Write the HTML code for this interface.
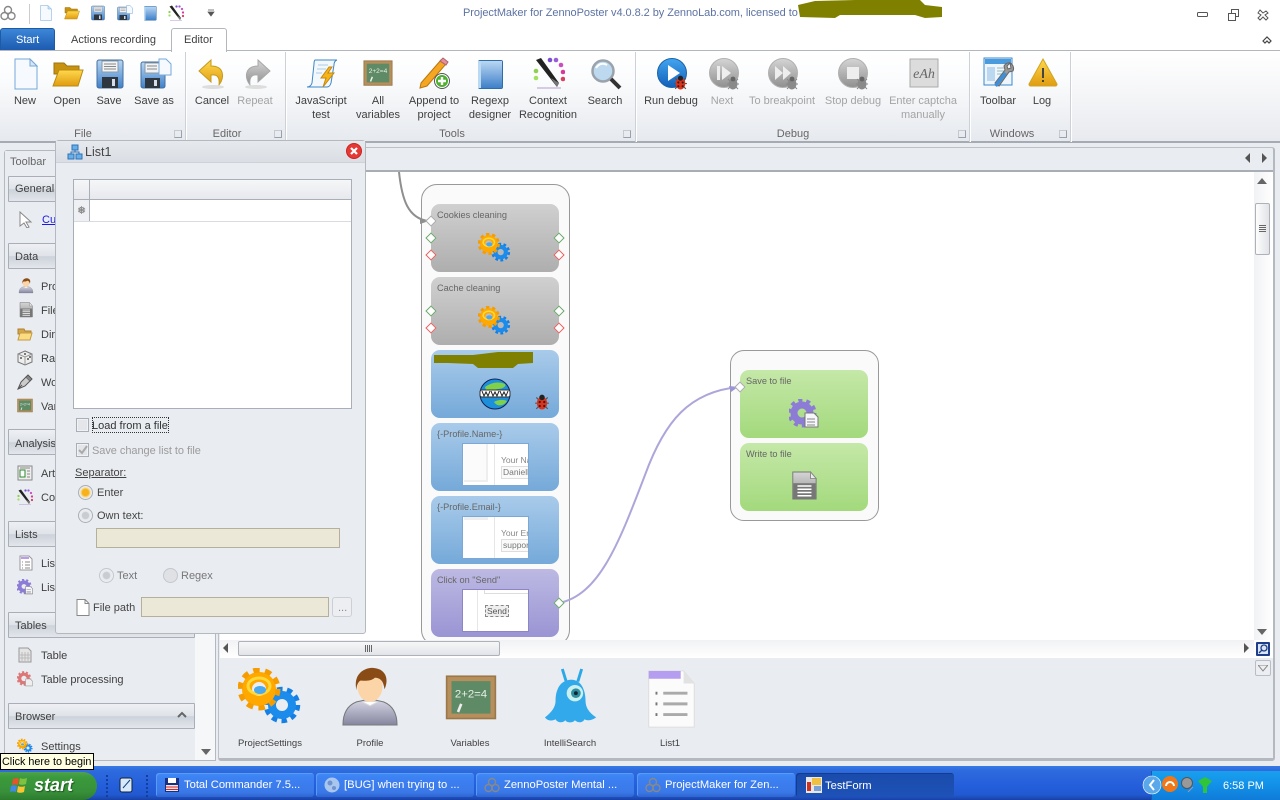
<!DOCTYPE html>
<html><head><meta charset="utf-8"><title>ProjectMaker for ZennoPoster</title>
<style>
html,body{margin:0;padding:0}
body{width:1280px;height:800px;position:relative;overflow:hidden;background:#e9ecf1;font-family:"Liberation Sans",sans-serif;font-size:11px;color:#333}
div,svg,span.a{position:absolute;box-sizing:border-box}
.t{position:absolute;white-space:nowrap;line-height:14px;font-size:11px;color:#3f3f3f}
.c{text-align:center;transform:translateX(-50%)}
.g{color:#a4a4a4}
.gl{color:#666}
.sep{width:1px;top:52px;height:90px;background:#ccd0d7;box-shadow:1px 0 0 #fff}
.lau{width:8px;height:8px;top:130px;border:1px solid #9aa0aa;border-top-color:#c5c9d0;border-left-color:#c5c9d0}
.hd{left:8px;width:187px;height:26px;border:1px solid #a9aeb8;background:linear-gradient(#eef0f4,#dfe3e9 50%,#ccd2da 52%,#e3e6eb);border-radius:1px}
.node{left:431px;width:128px;height:68px;border-radius:9px}
.gr{background:linear-gradient(#d0d0d0,#aeaeae)}
.bl{background:linear-gradient(#a9cbea,#75a9d9)}
.pu{background:linear-gradient(#bdb9e3,#9a95d3)}
.gn{background:linear-gradient(#c5e8a8,#a3d97c);left:740px}
.nt{position:absolute;left:6px;top:4px;font-size:9.2px;color:#666;white-space:nowrap;line-height:13px}
.th{background:#fff;border:1px solid #7ca8d8;left:31px;top:20px;width:67px;height:43px;overflow:hidden}
.th .t{font-size:8.5px}
.d{width:8px;height:8px;transform:rotate(45deg);background:#fff;border:1px solid #6aa86a}
.r{border-color:#e86060}
.w{border-color:#aaa}
.tb{top:773px;height:24px;width:158px;border-radius:3px;background:linear-gradient(#3f8cf3,#3c81f3 20%,#3a78e8 80%,#2f65d0);box-shadow:inset 1px 1px 0 #5a9bf7;color:#fff}
.tb .t{color:#fff;font-size:11.2px;left:28px;top:5px}
.chk{width:13px;height:14px;border:1px solid #a9aeb8;background:#e4e6ea;box-shadow:inset 0 0 0 1px #f1f2f4}
.rad{width:15px;height:15px;border-radius:50%;border:1px solid #a9aeb8;background:radial-gradient(#c8ccd3 35%,#e7e9ed 45%,#f5f6f8)}
.inp{background:#ebe8d8;border:1px solid #b5b09c}
.b{font-size:9.5px}
</style></head><body>

<svg width="0" height="0" style="left:0;top:0"><defs>
<linearGradient id="gy" x1="0" y1="0" x2="0" y2="1"><stop offset="0" stop-color="#ffd84d"/><stop offset="1" stop-color="#e09b10"/></linearGradient>
<linearGradient id="gb" x1="0" y1="0" x2="0" y2="1"><stop offset="0" stop-color="#b9d7f3"/><stop offset="1" stop-color="#3f80c9"/></linearGradient>
<linearGradient id="gs" x1="0" y1="0" x2="0" y2="1"><stop offset="0" stop-color="#d5d5d5"/><stop offset="1" stop-color="#8f8f8f"/></linearGradient>
<linearGradient id="gf" x1="0" y1="0" x2="0" y2="1"><stop offset="0" stop-color="#42a5f0"/><stop offset="1" stop-color="#1260b8"/></linearGradient>
<linearGradient id="gp" x1="0" y1="0" x2="0" y2="1"><stop offset="0" stop-color="#d8d8e6"/><stop offset="1" stop-color="#85859f"/></linearGradient>

<symbol id="new" viewBox="0 0 32 32"><path d="M5 1h15l7 7v23H5z" fill="#f6faff" stroke="#74a8da"/><path d="M20 1v7h7z" fill="#d8e7f7" stroke="#74a8da"/></symbol>
<symbol id="open" viewBox="0 0 32 32"><path d="M2 5h10l3 3h12v8H2z" fill="#c8920f" stroke="#9c7410"/><path d="M7 12h24l-5 16H1z" fill="url(#gy)" stroke="#b98a10"/></symbol>
<symbol id="save" viewBox="0 0 32 32"><rect x="3" y="2" width="26" height="28" rx="2" fill="url(#gb)" stroke="#44709f"/><rect x="8" y="3" width="16" height="11" fill="#f1f3f5" stroke="#8a98a8"/><path d="M10 6h12M10 8.5h12M10 11h12" stroke="#888"/><rect x="8" y="19" width="16" height="11" fill="#2e3740"/><rect x="18" y="21" width="3" height="7" fill="#d5dee8"/></symbol>
<symbol id="saveas" viewBox="0 0 32 32"><rect x="1" y="4" width="24" height="26" rx="2" fill="url(#gb)" stroke="#44709f"/><rect x="5" y="5" width="14" height="10" fill="#f1f3f5" stroke="#8a98a8"/><path d="M7 8h10M7 11h10" stroke="#888"/><rect x="5" y="20" width="15" height="10" fill="#2e3740"/><rect x="14" y="22" width="3" height="6" fill="#d5dee8"/><path d="M19 1h7l5 5v11H19z" fill="#f6faff" stroke="#74a8da"/></symbol>
<symbol id="undo" viewBox="0 0 32 32"><path d="M14 2 2 13l12 11v-7c6-1 9 2 8 10 6-8 5-19-8-19z" fill="url(#gy)" stroke="#c59b1e"/><ellipse cx="16" cy="29" rx="11" ry="2" fill="#ddd"/></symbol>
<symbol id="redo" viewBox="0 0 32 32"><path d="M18 2l12 11-12 11v-7c-6-1-9 2-8 10-6-8-5-19 8-19z" fill="url(#gs)" stroke="#a8a8a8"/><ellipse cx="16" cy="29" rx="11" ry="2" fill="#ddd"/></symbol>
<symbol id="js" viewBox="0 0 32 32"><path d="M9 2h22c-3 1-3 4-3 5l-3 18c-1 3-2 4-4 4H1c2 0 4-1 5-4L8 6c0-2 0-3 1-4z" fill="#f3f8fd" stroke="#3f87c7"/><path d="M12 7h10M11 11h9M10 15h6" stroke="#a9cbe8"/><path d="M23 9l-8 11h5l-3 9 11-14h-6l4-6z" fill="#f6b417" stroke="#c5870f"/></symbol>
<symbol id="vars" viewBox="0 0 32 32"><rect x="1" y="2" width="30" height="26" fill="#b78f5c" stroke="#9a7848"/><rect x="4" y="5" width="24" height="20" fill="#5f8a66"/><text x="16" y="15" text-anchor="middle" font-size="7" font-family="Liberation Sans" fill="#e6f0e6">2+2=4</text><path d="M8 24l2-5" stroke="#eee" stroke-width="1.6"/></symbol>
<symbol id="append" viewBox="0 0 32 32"><path d="M2 26 22 3l5 4L8 29l-7 2z" fill="#f5a623" stroke="#b9770f"/><path d="M21 4l3-3 5 4-2 3z" fill="#e88ca0" stroke="#a66"/><circle cx="23" cy="24" r="7.5" fill="#fff" stroke="#555"/><circle cx="23" cy="24" r="6" fill="#4db02f"/><path d="M19 24h8M23 20v8" stroke="#fff" stroke-width="2.4"/></symbol>
<symbol id="regexp" viewBox="0 0 32 32"><rect x="4" y="2" width="25" height="29" rx="2" fill="#2f6da8"/><rect x="6" y="3" width="22" height="27" fill="url(#gb)"/><rect x="4" y="3" width="3" height="27" fill="#bcd9f2"/></symbol>
<symbol id="ctx" viewBox="0 0 32 32"><path d="M3 3l5-2 18 25-2 4z" fill="#222"/><path d="M18 21l6 9 2-4z" fill="#777"/><g><circle cx="17" cy="3" r="2.300" fill="#7a4fd0"/><circle cx="23" cy="3" r="2.300" fill="#9a5cd6"/><circle cx="28" cy="8" r="2.300" fill="#c94fc0"/><circle cx="30" cy="15" r="2.300" fill="#d8389a"/><circle cx="30" cy="22" r="2.300" fill="#d84060"/><circle cx="3" cy="14" r="2.300" fill="#8fd04f"/><circle cx="3" cy="21" r="2.300" fill="#a4e060"/></g><path d="M4 31h24" stroke="#b49ad0"/></symbol>
<symbol id="search" viewBox="0 0 32 32"><circle cx="13" cy="13" r="10.5" fill="#bcd9f0" stroke="#9aa2ac" stroke-width="2.5"/><path d="M6 10c3-5 8-5 11-3" stroke="#fff" stroke-width="2" fill="none"/><path d="M21 21l9 9" stroke="#333" stroke-width="4"/></symbol>
<symbol id="bug" viewBox="0 0 12 14"><path d="M1 3l2 2M11 3L9 5M0 8h2M12 8h-2M1 13l2-2M11 13l-2-2" stroke="#555"/><ellipse cx="6" cy="8" rx="4.5" ry="5.5" fill="#e0321a"/><circle cx="6" cy="3" r="2.4" fill="#222"/><circle cx="4" cy="7" r="1" fill="#222"/><circle cx="8" cy="7" r="1" fill="#222"/><circle cx="4" cy="10.500" r="1" fill="#222"/><circle cx="8" cy="10.500" r="1" fill="#222"/></symbol>
<symbol id="gbug" viewBox="0 0 12 14"><path d="M1 3l2 2M11 3L9 5M0 8h2M12 8h-2M1 13l2-2M11 13l-2-2" stroke="#888"/><ellipse cx="6" cy="8" rx="4.500" ry="5.500" fill="#8a8a8a"/><circle cx="6" cy="3" r="2.400" fill="#666"/></symbol>
<symbol id="run" viewBox="0 0 32 32"><circle cx="15" cy="15" r="14.500" fill="url(#gf)" stroke="#1b62a8"/><path d="M11 7l12 8-12 8z" fill="#fff"/><use href="#bug" x="17" y="17" width="13" height="15"/></symbol>
<symbol id="next" viewBox="0 0 32 32"><circle cx="15" cy="15" r="14.500" fill="url(#gs)" stroke="#b0b0b0"/><rect x="8" y="8" width="3" height="14" fill="#eee"/><path d="M13 8l9 7-9 7z" fill="#eee"/><use href="#gbug" x="18" y="18" width="12" height="14"/></symbol>
<symbol id="brk" viewBox="0 0 32 32"><circle cx="15" cy="15" r="14.500" fill="url(#gs)" stroke="#b0b0b0"/><path d="M7 8l8 7-8 7zM15 8l8 7-8 7z" fill="#eee"/><use href="#gbug" x="18" y="18" width="12" height="14"/></symbol>
<symbol id="stop" viewBox="0 0 32 32"><circle cx="15" cy="15" r="14.500" fill="url(#gs)" stroke="#b0b0b0"/><rect x="9" y="9" width="12" height="12" fill="#eee"/><use href="#gbug" x="18" y="18" width="12" height="14"/></symbol>
<symbol id="cap" viewBox="0 0 32 32"><rect x="2" y="2" width="28" height="28" fill="#dcdcdc" stroke="#aaa"/><text x="16" y="21" text-anchor="middle" font-size="14" font-style="italic" font-family="Liberation Serif" fill="#666">eAh</text></symbol>
<symbol id="tbar" viewBox="0 0 32 32"><rect x="1" y="1" width="28" height="27" fill="#eef5fc" stroke="#3c88cc"/><rect x="2" y="2" width="26" height="5" fill="#4a9ade"/><path d="M4 10h8v14H4z" fill="#bcd7f0"/><path d="M14 11h9M14 14h9M14 17h7" stroke="#9bb"/><path d="M27 6a6 6 0 0 1 3 8l-4 1-10 14-4-3 10-13-1-4a6 6 0 0 1 6-3l-3 3 1 3 3-1z" fill="#9a9a9a" stroke="#666"/><path d="M11 28l10-13 3 2-10 13z" fill="#3f8fd8"/></symbol>
<symbol id="log" viewBox="0 0 32 32"><path d="M16 2 30 27a2 2 0 0 1-1 2H3a2 2 0 0 1-1-2z" fill="url(#gy)" stroke="#d0a520"/><path d="M15 11h2v10h-2zM15 23h2v2h-2z" fill="#444"/></symbol>
<symbol id="gear" viewBox="0 0 64 58"><g fill="none"><circle cx="44" cy="37" r="10" stroke="#1b8cec" stroke-width="8"/><circle cx="44" cy="37" r="16" stroke="#1480e6" stroke-width="4.500" stroke-dasharray="5.500 4.550"/><circle cx="21" cy="21" r="12" stroke="#ffa800" stroke-width="10"/><circle cx="21" cy="21" r="19" stroke="#f59c00" stroke-width="5" stroke-dasharray="6.500 5.440"/><ellipse cx="21" cy="18" rx="11" ry="8" stroke="#ffd93a" stroke-width="3"/></g><ellipse cx="22" cy="22" rx="6" ry="4" fill="#4aa8ee"/></symbol>
<symbol id="pgear" viewBox="0 0 30 30"><circle cx="13" cy="14" r="8" fill="none" stroke="#8d7cd6" stroke-width="7"/><circle cx="13" cy="14" r="12.500" fill="none" stroke="#8d7cd6" stroke-width="4" stroke-dasharray="4 3.850"/><path d="M16 14h9l4 4v10H16z" fill="#f6f6fb" stroke="#777"/><path d="M18 20h8M18 23h8M18 26h8" stroke="#888"/></symbol>
<symbol id="doc" viewBox="0 0 30 32"><path d="M3 1h19l6 7v22H3z" fill="url(#gs)" stroke="#777"/><path d="M22 1v7h6z" fill="#eee" stroke="#888"/><rect x="3.500" y="13" width="24" height="17" fill="#777"/><path d="M8 16h15M8 19.500h15M8 23h15M8 26.500h15" stroke="#fff" stroke-width="1.600"/></symbol>
<symbol id="user" viewBox="0 0 60 64"><path d="M2 60c0-12 4-20 14-24l14-3 14 3c10 4 14 12 14 24z" fill="url(#gp)" stroke="#777"/><ellipse cx="30" cy="20" rx="13" ry="16" fill="#fbd5a8"/><path d="M16 24C12 6 26 0 34 1c12 1 16 11 11 22-1-8-4-12-10-12-4 4-12 3-15 3-3 2-4 6-4 10z" fill="#8a4c16"/><path d="M22 36l8 4 8-4" fill="#fff" stroke="#ddd"/></symbol>
<symbol id="folder" viewBox="0 0 16 16"><path d="M1 3h6l1 2h6v3H1z" fill="#d5a54a" stroke="#b08030"/><path d="M3 7h12l-2 7H1z" fill="#fbdc82" stroke="#c49a40"/></symbol>
<symbol id="dice" viewBox="0 0 16 16"><path d="M8 1l7 3v8l-7 3-7-3V4z" fill="#eee" stroke="#777"/><path d="M1 4l7 3 7-3M8 7v8" stroke="#999" fill="none"/><circle cx="4" cy="8" r="1" fill="#555"/><circle cx="11" cy="9" r="1" fill="#555"/><circle cx="13" cy="7" r="1" fill="#555"/><circle cx="8" cy="4" r="1" fill="#555"/></symbol>
<symbol id="pen" viewBox="0 0 16 16"><path d="M1 15l3-7 5-5 4 4-5 5z" fill="#ccc" stroke="#555"/><path d="M9 3l2-2 4 4-2 2" fill="#888" stroke="#555"/><path d="M1 15l4-4" stroke="#555"/></symbol>
<symbol id="art" viewBox="0 0 16 16"><rect x="1" y="1" width="14" height="14" fill="#eee" stroke="#888"/><rect x="3" y="5" width="5" height="7" fill="#fff" stroke="#2a8a2a"/><path d="M3 3h10M10 6h3M10 9h3M10 12h3" stroke="#888"/></symbol>
<symbol id="list" viewBox="0 0 16 16"><path d="M2 1h9l3 3v11H2z" fill="#fff" stroke="#999"/><rect x="3" y="2" width="8" height="2" fill="#b79cf0"/><path d="M4 7h1M7 7h5M4 10h1M7 10h5M4 13h1M7 13h5" stroke="#888"/></symbol>
<symbol id="tbl" viewBox="0 0 16 16"><path d="M2 1h9l3 3v11H2z" fill="#e4e4e4" stroke="#999"/><path d="M5 5v9M8 5v9M11 5v9M3 8h10M3 11h10" stroke="#bbb"/></symbol>
<symbol id="rgear" viewBox="0 0 30 30"><circle cx="13" cy="14" r="8" fill="none" stroke="#d77" stroke-width="6"/><circle cx="13" cy="14" r="12" fill="none" stroke="#d77" stroke-width="3.500" stroke-dasharray="4 3.500"/><path d="M16 15h9l4 4v9H16z" fill="#eee" stroke="#999"/></symbol>
<symbol id="alien" viewBox="0 0 60 62"><path d="M24 14L20 1M36 14l4-13" stroke="#2aa8e8" stroke-width="3"/><path d="M30 12C18 12 13 22 13 34c0 6-4 12-11 17 3 4 8 4 11 2 2 4 8 4 10 1 2 3 8 3 10 0 3 3 8 3 10-1 3 2 8 1 12-2-8-5-11-11-11-17 0-12-5-22-15-22z" fill="#31a9ea"/><circle cx="33" cy="26" r="8.500" fill="#c9f0ee"/><circle cx="34" cy="26" r="5" fill="#2e8ea0"/><circle cx="34" cy="26" r="2" fill="#123"/></symbol>
<symbol id="bigl" viewBox="0 0 52 64"><path d="M3 2h36l11 13v45H3z" fill="#fbfbfb" stroke="#ddd"/><path d="M3 2h33v8H3z" fill="#b59ef0"/><path d="M39 2v13h11z" fill="#e2e2e2"/><path d="M10 25h2M10 36h2M10 47h2" stroke="#777" stroke-width="3"/><path d="M18 25h25M18 36h25M18 47h25" stroke="#aaa" stroke-width="3"/></symbol>
<symbol id="globe" viewBox="0 0 32 32"><circle cx="16" cy="16" r="15" fill="#1d8fdb" stroke="#125"/><path d="M6 9c6-4 12-6 20-3 2 3-4 5-7 5-3 0-5 3-8 3-3 1-4-2-5-5zM15 24c3-2 9-3 13-1-2 4-9 7-13 1z" fill="#7fd04a"/><rect x="1" y="12" width="30" height="7" rx="2" fill="#fff" stroke="#333"/><path d="M3 13l2 5 2-4 2 4 2-5M12 13l2 5 2-4 2 4 2-5M21 13l2 5 2-4 2 4 2-5" stroke="#222" fill="none"/></symbol>
<symbol id="tree" viewBox="0 0 16 16"><rect x="5" y="1" width="6" height="5" fill="#6aaee8" stroke="#2c72b8"/><rect x="1" y="10" width="6" height="5" fill="#6aaee8" stroke="#2c72b8"/><rect x="9" y="10" width="6" height="5" fill="#6aaee8" stroke="#2c72b8"/><path d="M8 6v2M4 10V8h8v2" stroke="#2c72b8" fill="none"/></symbol>
<symbol id="zp" viewBox="0 0 16 16"><g fill="none" stroke="#888" stroke-width="1.400"><circle cx="8" cy="5" r="3.500"/><circle cx="4.500" cy="11" r="3.500"/><circle cx="11.500" cy="11" r="3.500"/></g></symbol>
</defs></svg>

<!-- title + tabs -->
<div style="left:0;top:0;width:1280px;height:51px;background:#fff"></div>
<svg style="left:0;top:5px" width="16" height="16"><use href="#zp"/></svg>
<div style="left:29px;top:4px;width:1px;height:20px;background:#ccc"></div>
<svg style="left:38px;top:5px" width="16" height="16"><use href="#new"/></svg>
<svg style="left:64px;top:5px" width="16" height="16"><use href="#open"/></svg>
<svg style="left:90px;top:5px" width="16" height="16"><use href="#save"/></svg>
<svg style="left:117px;top:5px" width="16" height="16"><use href="#saveas"/></svg>
<svg style="left:142px;top:5px" width="16" height="16"><use href="#regexp"/></svg>
<svg style="left:168px;top:5px" width="16" height="16"><use href="#ctx"/></svg>
<svg style="left:207px;top:9px" width="8" height="8"><path d="M1 1h6M1 3h6l-3 4z" fill="#555" stroke="#555" stroke-width=".7"/></svg>
<span class="t" style="left:463px;top:6px;color:#5d73a3;font-size:11px;letter-spacing:-.06px">ProjectMaker for ZennoPoster v4.0.8.2 by ZennoLab.com, licensed to</span>
<svg style="left:795px;top:0" width="150" height="20"><path d="M3 5L20 1 60 0H125l5 5 17 2V17l-17 1-10-3H45l-5 3-35-1z" fill="#808000"/></svg>
<svg style="left:1195px;top:8px" width="80" height="14" fill="none" stroke="#555"><rect x="2.500" y="4.500" width="10" height="4" rx="1"/><rect x="36.500" y="1.500" width="7" height="7" fill="#fff"/><rect x="33.500" y="5.500" width="7" height="7" fill="#fff"/><path d="M65 2l3 3 3-2 2 2-3 2 3 3-2 2-3-3-3 3-2-2 3-3-3-2z"/></svg>
<svg style="left:1262px;top:36px" width="10" height="9" fill="none" stroke="#444" stroke-width="1.200"><path d="M1 5l4-4 4 4-2 2-2-2-2 2z"/></svg>
<div style="left:0;top:28px;width:55px;height:22px;background:linear-gradient(#3c86d8,#1d5bb0);border-radius:3px 3px 0 0;border:1px solid #1f5aa5;border-bottom:0"></div>
<span class="t" style="left:16px;top:33px;color:#fff">Start</span>
<span class="t" style="left:71px;top:33px">Actions recording</span>
<div style="left:171px;top:28px;width:56px;height:24px;background:#fff;border:1px solid #b3b6bd;border-bottom:0;border-radius:3px 3px 0 0;z-index:2"></div>
<span class="t" style="left:184px;top:33px;z-index:3">Editor</span>

<!-- ribbon -->
<div style="left:0;top:50px;width:1280px;height:93px;background:linear-gradient(#fff 0,#fbfcfd 30%,#e6e9ee 100%);border-top:1px solid #b3b6bd;border-bottom:2px solid #a6aab2"></div>
<div style="left:1071px;top:51px;width:209px;height:90px;background:linear-gradient(#fff,#f4f5f7 50%,#e8eaef)"></div>
<div class="sep" style="left:185px"></div><div class="sep" style="left:285px"></div><div class="sep" style="left:635px"></div><div class="sep" style="left:969px"></div><div class="sep" style="left:1070px"></div>
<div class="lau" style="left:174px"></div><div class="lau" style="left:274px"></div><div class="lau" style="left:623px"></div><div class="lau" style="left:958px"></div><div class="lau" style="left:1059px"></div>

<svg style="left:10px;top:58px" width="32" height="32"><use href="#new"/></svg>
<svg style="left:52px;top:58px" width="32" height="32"><use href="#open"/></svg>
<svg style="left:94px;top:58px" width="32" height="32"><use href="#save"/></svg>
<svg style="left:140px;top:58px" width="32" height="32"><use href="#saveas"/></svg>
<svg style="left:197px;top:58px" width="32" height="32"><use href="#undo"/></svg>
<svg style="left:240px;top:58px" width="32" height="32"><use href="#redo"/></svg>
<svg style="left:306px;top:58px" width="32" height="32"><use href="#js"/></svg>
<svg style="left:362px;top:59px" width="32" height="30"><use href="#vars"/></svg>
<svg style="left:419px;top:57px" width="32" height="32"><use href="#append"/></svg>
<svg style="left:474px;top:58px" width="32" height="32"><use href="#regexp"/></svg>
<svg style="left:533px;top:57px" width="32" height="32"><use href="#ctx"/></svg>
<svg style="left:590px;top:58px" width="32" height="32"><use href="#search"/></svg>
<svg style="left:657px;top:58px" width="32" height="32"><use href="#run"/></svg>
<svg style="left:709px;top:58px" width="32" height="32"><use href="#next"/></svg>
<svg style="left:768px;top:58px" width="32" height="32"><use href="#brk"/></svg>
<svg style="left:838px;top:58px" width="32" height="32"><use href="#stop"/></svg>
<svg style="left:908px;top:57px" width="32" height="32"><use href="#cap"/></svg>
<svg style="left:983px;top:57px" width="32" height="32"><use href="#tbar"/></svg>
<svg style="left:1027px;top:57px" width="32" height="32"><use href="#log"/></svg>

<span class="t c" style="left:25px;top:94px">New</span>
<span class="t c" style="left:67px;top:94px">Open</span>
<span class="t c" style="left:109px;top:94px">Save</span>
<span class="t c" style="left:154px;top:94px">Save as</span>
<span class="t c" style="left:212px;top:94px">Cancel</span>
<span class="t c g" style="left:255px;top:94px">Repeat</span>
<span class="t c" style="left:321px;top:94px">JavaScript</span><span class="t c" style="left:321px;top:108px">test</span>
<span class="t c" style="left:378px;top:94px">All</span><span class="t c" style="left:378px;top:108px">variables</span>
<span class="t c" style="left:434px;top:94px">Append to</span><span class="t c" style="left:434px;top:108px">project</span>
<span class="t c" style="left:490px;top:94px">Regexp</span><span class="t c" style="left:490px;top:108px">designer</span>
<span class="t c" style="left:548px;top:94px">Context</span><span class="t c" style="left:548px;top:108px">Recognition</span>
<span class="t c" style="left:605px;top:94px">Search</span>
<span class="t c" style="left:671px;top:94px">Run debug</span>
<span class="t c g" style="left:722px;top:94px">Next</span>
<span class="t c g" style="left:782px;top:94px">To breakpoint</span>
<span class="t c g" style="left:853px;top:94px">Stop debug</span>
<span class="t c g" style="left:923px;top:94px">Enter captcha</span><span class="t c g" style="left:923px;top:108px">manually</span>
<span class="t c" style="left:998px;top:94px">Toolbar</span>
<span class="t c" style="left:1042px;top:94px">Log</span>
<span class="t c gl" style="left:83px;top:127px">File</span>
<span class="t c gl" style="left:227px;top:127px">Editor</span>
<span class="t c gl" style="left:452px;top:127px">Tools</span>
<span class="t c gl" style="left:793px;top:127px">Debug</span>
<span class="t c gl" style="left:1012px;top:127px">Windows</span>

<!-- workspace -->
<div style="left:0;top:143px;width:1280px;height:622px;background:#e9ecf1"></div>
<div style="left:218px;top:147px;width:1057px;height:614px;border:1px solid #bcc0c7;border-right:2px solid #b4b8bf;border-bottom:3px solid #b4b8bf;border-radius:3px"></div>
<svg style="left:1243px;top:152px" width="30" height="13" fill="#555"><path d="M7 1v10L2 6zM19 1v10l5-5z"/></svg>

<!-- canvas -->
<div style="left:220px;top:170px;width:1053px;height:488px;background:#fff;border-top:2px solid #a9adb5"></div>
<div style="left:1254px;top:172px;width:19px;height:468px;background:linear-gradient(90deg,#f1f2f4,#fff)"></div>
<svg style="left:1257px;top:177px" width="11" height="8"><path d="M0 7h10L5 1z" fill="#666"/></svg>
<div style="left:1255px;top:203px;width:15px;height:52px;background:linear-gradient(90deg,#fdfdfd,#e1e3e7);border:1px solid #adb1b8;border-radius:2px"></div>
<svg style="left:1258px;top:224px" width="9" height="9" stroke="#666"><path d="M1 1.500h7M1 3.500h7M1 5.500h7M1 7.500h7"/></svg>
<svg style="left:1257px;top:629px" width="11" height="7"><path d="M0 0h10L5 6z" fill="#666"/></svg>
<div style="left:1256px;top:642px;width:14px;height:14px;background:#dbe6f4;border:2px solid #1f3f8a;border-radius:1px"></div>
<svg style="left:1258px;top:644px" width="10" height="10" fill="none" stroke="#1f3f8a" stroke-width="1.300"><circle cx="6" cy="4" r="3"/><path d="M4 6L1 9"/></svg>
<div style="left:1255px;top:660px;width:16px;height:16px;background:#eceef1;border:1px solid #b9bdc4;border-radius:2px"></div>
<svg style="left:1258px;top:665px" width="10" height="7"><path d="M0 0h10L5 6z" fill="none" stroke="#888"/></svg>

<!-- group 1 -->
<div style="left:421px;top:184px;width:149px;height:462px;background:#fafafa;border:1px solid #999;border-radius:16px"></div>
<div class="node gr" style="top:204px"><span class="nt" style="top:5px">Cookies cleaning</span><svg style="left:47px;top:29px" width="33" height="30"><use href="#gear"/></svg></div>
<div class="node gr" style="top:277px"><span class="nt" style="top:5px">Cache cleaning</span><svg style="left:47px;top:29px" width="33" height="30"><use href="#gear"/></svg></div>
<div class="node bl" style="top:350px"><svg style="left:48px;top:28px" width="32" height="32"><use href="#globe"/></svg><svg style="left:104px;top:44px" width="14" height="16"><use href="#bug"/></svg></div>
<svg style="left:433px;top:352px" width="102" height="18"><path d="M1 3H40L65 0H100V11L85 12 80 16H45L40 12 15 11H1z" fill="#808000"/></svg>
<div class="node bl" style="top:423px"><span class="nt" style="top:5px">{-Profile.Name-}</span><div class="th"><div style="left:1px;top:0;width:24px;height:38px;background:#fbfbfb;border-right:2px solid #eee;border-bottom:2px solid #eee"></div><div style="left:31px;top:0;width:1px;height:42px;background:#e6e6e6"></div><span class="t" style="left:38px;top:9px;color:#888">Your Na</span><div style="left:38px;top:22px;width:30px;height:13px;background:#fafafa;border:1px solid #ddd"></div><span class="t" style="left:40px;top:21px;color:#777">Daniell</span></div></div>
<div class="node bl" style="top:496px"><span class="nt" style="top:5px">{-Profile.Email-}</span><div class="th"><div style="left:1px;top:0;width:24px;height:3px;background:#eee"></div><div style="left:31px;top:0;width:1px;height:42px;background:#e6e6e6"></div><span class="t" style="left:38px;top:9px;color:#888">Your En</span><div style="left:38px;top:22px;width:30px;height:13px;background:#fafafa;border:1px solid #ddd"></div><span class="t" style="left:40px;top:21px;color:#777">suppor</span></div></div>
<div class="node pu" style="top:569px"><span class="nt" style="top:5px">Click on "Send"</span><div class="th" style="border-color:#8a86c8"><div style="left:14px;top:0;width:1px;height:42px;background:#e6e6e6"></div><div style="left:21px;top:0;width:46px;height:4px;border-left:1px solid #ddd;border-bottom:1px solid #ddd"></div><div style="left:22px;top:15px;width:24px;height:12px;border:1px dashed #888;background:#eee"></div><span class="t" style="left:24px;top:14px;color:#555">Send</span></div></div>

<!-- group 2 -->
<div style="left:730px;top:350px;width:149px;height:171px;background:#fafafa;border:1px solid #999;border-radius:14px"></div>
<div class="node gn" style="top:370px"><span class="nt" style="top:5px">Save to file</span><svg style="left:49px;top:29px" width="30" height="30"><use href="#pgear"/></svg></div>
<div class="node gn" style="top:443px"><span class="nt" style="top:5px">Write to file</span><svg style="left:50px;top:27px" width="28" height="32"><use href="#doc"/></svg></div>

<!-- connectors -->
<svg style="left:380px;top:170px" width="400" height="450" fill="none">
<path d="M19 2C22 30 28 48 48 51" stroke="#8f8f8f" stroke-width="2"/>
<path d="M49 51l-9-3v6z" fill="#8f8f8f"/>
<path d="M179 433C220 425 240 370 265 305C285 250 310 222 358 217" stroke="#aca6da" stroke-width="2"/>
<path d="M358 217l-9-1 2 6z" fill="#9a94d8"/>
</svg>

<div class="d w" style="left:427px;top:217px"></div>
<div class="d" style="left:427px;top:234px"></div><div class="d r" style="left:427px;top:251px"></div>
<div class="d" style="left:555px;top:234px"></div><div class="d r" style="left:555px;top:251px"></div>
<div class="d" style="left:427px;top:307px"></div><div class="d r" style="left:427px;top:324px"></div>
<div class="d" style="left:555px;top:307px"></div><div class="d r" style="left:555px;top:324px"></div>
<div class="d" style="left:555px;top:599px"></div>
<div class="d w" style="left:736px;top:383px"></div>

<!-- horizontal scrollbar -->
<div style="left:220px;top:640px;width:1034px;height:18px;background:linear-gradient(#f1f2f4,#fff)"></div>
<div style="left:238px;top:641px;width:262px;height:15px;background:linear-gradient(#f7f7f8,#e2e4e8);border:1px solid #adb1b8;border-radius:2px"></div>
<svg style="left:364px;top:644px" width="9" height="9" stroke="#666"><path d="M1.500 1v7M3.500 1v7M5.500 1v7M7.500 1v7"/></svg>
<svg style="left:222px;top:643px" width="8" height="11"><path d="M6 0v10L1 5z" fill="#555"/></svg>
<svg style="left:1243px;top:643px" width="8" height="11"><path d="M1 0v10l5-5z" fill="#555"/></svg>

<!-- bottom tray -->
<svg style="left:238px;top:668px" width="64" height="58"><use href="#gear"/></svg>
<svg style="left:341px;top:667px" width="58" height="62"><use href="#user"/></svg>
<svg style="left:440px;top:673px" width="62" height="52"><use href="#vars"/></svg>
<svg style="left:543px;top:667px" width="58" height="62"><use href="#alien"/></svg>
<svg style="left:645px;top:669px" width="52" height="62"><use href="#bigl"/></svg>
<span class="t c b" style="left:270px;top:737px">ProjectSettings</span>
<span class="t c b" style="left:370px;top:737px">Profile</span>
<span class="t c b" style="left:470px;top:737px">Variables</span>
<span class="t c b" style="left:570px;top:737px">IntelliSearch</span>
<span class="t c b" style="left:670px;top:737px">List1</span>

<!-- toolbar panel -->
<div style="left:4px;top:150px;width:212px;height:611px;background:#fff;border:1px solid #b4b8bf;border-radius:3px 3px 0 0"></div>
<div style="left:5px;top:151px;width:210px;height:22px;background:#e9ecf1"></div>
<div style="left:5px;top:173px;width:190px;height:587px;background:#e9ecf1"></div>
<div style="left:195px;top:173px;width:20px;height:587px;background:#f6f7f9"></div>
<span class="t gl" style="left:10px;top:155px">Toolbar</span>
<svg style="left:201px;top:749px" width="10" height="7"><path d="M0 0h10L5 6z" fill="#666"/></svg>

<div class="hd" style="top:176px"></div><span class="t" style="left:15px;top:182px">General</span>
<div class="hd" style="top:243px"></div><span class="t" style="left:15px;top:250px">Data</span>
<div class="hd" style="top:429px"></div><span class="t" style="left:15px;top:437px">Analysis</span>
<div class="hd" style="top:521px"></div><span class="t" style="left:15px;top:528px">Lists</span>
<div class="hd" style="top:612px"></div><span class="t" style="left:15px;top:619px">Tables</span>
<div class="hd" style="top:703px"></div><span class="t" style="left:15px;top:710px">Browser</span>
<svg style="left:177px;top:711px" width="10" height="8"><path d="M1 6l4-4 4 4" stroke="#666" stroke-width="2" fill="none"/></svg>

<svg style="left:19px;top:211px" width="14" height="17"><path d="M1 1v14l4-3 3 5 2-1-3-5h5z" fill="#fff" stroke="#888"/></svg>
<span class="t" style="left:42px;top:213px;color:#1a1ae8;text-decoration:underline">Curs</span>
<svg style="left:18px;top:278px" width="16" height="16"><use href="#user"/></svg><span class="t" style="left:41px;top:280px">Profile</span>
<svg style="left:18px;top:302px" width="16" height="16"><use href="#doc"/></svg><span class="t" style="left:41px;top:304px">File</span>
<svg style="left:17px;top:326px" width="16" height="16"><use href="#folder"/></svg><span class="t" style="left:41px;top:328px">Dir</span>
<svg style="left:17px;top:350px" width="16" height="16"><use href="#dice"/></svg><span class="t" style="left:41px;top:352px">Ra</span>
<svg style="left:17px;top:374px" width="16" height="16"><use href="#pen"/></svg><span class="t" style="left:41px;top:376px">Wo</span>
<svg style="left:17px;top:398px" width="16" height="16"><use href="#vars"/></svg><span class="t" style="left:41px;top:400px">Var</span>
<svg style="left:17px;top:465px" width="16" height="16"><use href="#art"/></svg><span class="t" style="left:41px;top:467px">Art</span>
<svg style="left:17px;top:489px" width="16" height="16"><use href="#ctx"/></svg><span class="t" style="left:41px;top:491px">Co</span>
<svg style="left:18px;top:555px" width="16" height="16"><use href="#list"/></svg><span class="t" style="left:41px;top:557px">List</span>
<svg style="left:17px;top:579px" width="16" height="16"><use href="#pgear"/></svg><span class="t" style="left:41px;top:581px">List</span>
<svg style="left:17px;top:647px" width="16" height="16"><use href="#tbl"/></svg><span class="t" style="left:41px;top:649px">Table</span>
<svg style="left:17px;top:671px" width="16" height="16"><use href="#rgear"/></svg><span class="t" style="left:41px;top:673px">Table processing</span>
<svg style="left:17px;top:738px" width="16" height="16"><use href="#gear"/></svg><span class="t" style="left:41px;top:740px">Settings</span>

<!-- dialog -->
<div style="left:55px;top:140px;width:311px;height:494px;background:#e9ecf1;border:1px solid #b4b8bf;border-radius:4px 4px 3px 3px;z-index:5">
 <div style="left:0;top:0;width:309px;height:22px;background:linear-gradient(#e6e9ed,#dadee4);border-bottom:1px solid #cfd3d9"></div>
 <svg style="left:11px;top:3px" width="16" height="16"><use href="#tree"/></svg>
 <span class="t" style="left:29px;top:3px;font-size:12.5px;line-height:16px;color:#444">List1</span>
 <svg style="left:290px;top:2px" width="16" height="16"><circle cx="8" cy="8" r="7.500" fill="#e53935" stroke="#c22"/><path d="M5 5l6 6M11 5l-6 6" stroke="#fff" stroke-width="2.200"/></svg>

 <div style="left:17px;top:38px;width:279px;height:230px;background:#fff;border:1px solid #a9aeb8">
  <div style="left:0;top:0;width:277px;height:20px;background:linear-gradient(#f5f6f8,#e7e9ed);border-bottom:1px solid #a9aeb8"></div>
  <div style="left:15px;top:0;width:1px;height:41px;background:#a9aeb8"></div>
  <div style="left:0;top:20px;width:15px;height:21px;background:#eef0f3"></div>
  <div style="left:0;top:41px;width:277px;height:1px;background:#d8dce2"></div>
  <span class="t" style="left:3px;top:24px;font-size:11px;color:#777">&#10053;</span>
 </div>

 <div class="chk" style="left:20px;top:277px"></div>
 <div style="left:36px;top:276px;width:77px;height:16px;border:1px dotted #333"></div>
 <span class="t" style="left:36px;top:278px;color:#333">Load from a file</span>
 <div class="chk" style="left:20px;top:302px;background:#e3e5e8"></div>
 <svg style="left:22px;top:304px" width="10" height="10"><path d="M1 5l3 3 5-7" stroke="#aaa" stroke-width="2" fill="none"/></svg>
 <span class="t g" style="left:36px;top:303px;color:#9b9b9b;letter-spacing:-.05px">Save change list to file</span>
 <span class="t" style="left:19px;top:325px;text-decoration:underline;color:#444">Separator:</span>

 <div class="rad" style="left:22px;top:344px;background:radial-gradient(#f7b21a 35%,#f5dc9a 50%,#eceef1 65%)"></div>
 <span class="t" style="left:41px;top:345px;color:#444">Enter</span>
 <div class="rad" style="left:22px;top:367px"></div>
 <span class="t" style="left:41px;top:368px;color:#444">Own text:</span>
 <div class="inp" style="left:40px;top:387px;width:244px;height:20px"></div>
 <div class="rad" style="left:43px;top:427px;border-color:#c4c7cd"></div>
 <span class="t" style="left:61px;top:428px;color:#777">Text</span>
 <div class="rad" style="left:107px;top:427px;border-color:#c4c7cd;background:#dfe1e5"></div>
 <span class="t" style="left:125px;top:428px;color:#777">Regex</span>
 <svg style="left:20px;top:458px" width="14" height="17"><path d="M1 .5h8l4 4v12H1z" fill="#fff" stroke="#888"/><path d="M9 .5v4h4" fill="none" stroke="#888"/></svg>
 <span class="t" style="left:37px;top:460px;color:#444">File path</span>
 <div class="inp" style="left:85px;top:456px;width:188px;height:20px"></div>
 <div style="left:276px;top:456px;width:20px;height:20px;border:1px solid #ccd0d6;border-radius:3px;background:#eceef1"></div>
 <span class="t" style="left:282px;top:460px;color:#888">...</span>
</div>

<!-- taskbar -->
<div style="left:0;top:766px;width:1280px;height:34px;background:linear-gradient(#3a7ae6 0,#2f6fe0 3px,#2d69dd 6px,#245edb 60%,#2159d0 85%,#1941a5 100%);z-index:6"></div>
<div style="left:1151px;top:771px;width:129px;height:29px;background:linear-gradient(#19a0ee,#1290e8 50%,#0f7bd8);border-left:1px solid #0b5fb8;z-index:6"></div>
<div style="left:0;top:772px;width:97px;height:28px;background:linear-gradient(#4fa34e,#3a9a3b 20%,#38903a 70%,#2c7a2e);border-radius:0 14px 14px 0;z-index:7"></div>
<svg style="left:10px;top:775px;z-index:8" width="20" height="20"><path d="M3 4c3-1 5-1 6 0l-1 6c-2-1-4-1-6 0z" fill="#e8532a"/><path d="M10 3c2 1 4 1 7 0l-1 6c-3 1-5 1-7 0z" fill="#7fc241"/><path d="M1 11c2-1 4-1 6 0l-1 6c-2-1-4-1-6 0z" fill="#3f8ae8"/><path d="M8 11c2 1 5 1 7 0l-1 6c-3 1-5 1-7 0z" fill="#fbc531"/></svg>
<span class="t" style="left:34px;top:775px;z-index:8;color:#fff;font-weight:bold;font-style:italic;font-size:18px;line-height:20px;text-shadow:1px 1px 1px #1d5a1d">start</span>
<svg style="left:105px;top:774px;z-index:8" width="45" height="24"><path d="M2 1v22M42 1v22" stroke="#123f9e" stroke-dasharray="2 2" stroke-width="2"/></svg>
<svg style="left:118px;top:777px;z-index:8" width="16" height="16"><rect x="2" y="1" width="12" height="14" rx="2" fill="#d7e8fa" stroke="#123"/><path d="M5 11l7-8" stroke="#147"/></svg>

<div class="tb" style="left:156px;z-index:8"><svg style="left:8px;top:4px" width="16" height="16"><rect x="1" y="1" width="14" height="14" fill="#1a2f80"/><rect x="4" y="1" width="8" height="5" fill="#fff"/><rect x="2" y="8" width="12" height="6" fill="#e8e8e8"/><path d="M2 10h12M2 12.500h12" stroke="#d22"/></svg><span class="t">Total Commander 7.5...</span></div>
<div class="tb" style="left:316px;z-index:8"><svg style="left:8px;top:4px" width="16" height="16"><circle cx="8" cy="8" r="7.500" fill="#a9c6ef"/><circle cx="6" cy="6" r="2.500" fill="#6f93d0"/><circle cx="10" cy="11" r="2" fill="#6f93d0"/></svg><span class="t">[BUG] when trying to ...</span></div>
<div class="tb" style="left:476px;z-index:8"><svg style="left:8px;top:4px" width="16" height="16"><use href="#zp"/></svg><span class="t">ZennoPoster Mental ...</span></div>
<div class="tb" style="left:637px;z-index:8"><svg style="left:8px;top:4px" width="16" height="16"><use href="#zp"/></svg><span class="t">ProjectMaker for Zen...</span></div>
<div class="tb" style="left:796px;z-index:8;background:linear-gradient(#1a4bab,#1e52b7);box-shadow:inset 1px 1px 0 #133c8f"><svg style="left:10px;top:4px" width="16" height="16"><rect width="16" height="16" fill="#e8e8e8"/><rect x="1" y="5" width="4" height="9" fill="#cc3322"/><rect x="6" y="1" width="9" height="7" fill="#f0c040"/><rect x="8" y="9" width="7" height="5" fill="#7aa0d8"/></svg><span class="t" style="left:29px;top:6px">TestForm</span></div>

<svg style="left:1142px;top:775px;z-index:8" width="80" height="20">
<circle cx="10" cy="10" r="9" fill="#5aa8ea" stroke="#fff" stroke-width=".6"/><path d="M12 5l-4 5 4 5" stroke="#fff" stroke-width="2" fill="none"/>
<circle cx="28" cy="9" r="8" fill="#f07818"/><path d="M24 11a4 4 0 1 1 8 0" stroke="#fff" stroke-width="2" fill="none"/>
<circle cx="45" cy="8" r="5.500" fill="#999" stroke="#555"/><path d="M46 17l5-5" stroke="#99b"/>
<path d="M56 6l7-4 7 4-7 8z" fill="#2fc43a"/><rect x="61" y="11" width="4" height="7" fill="#2fc43a"/>
</svg>
<span class="t" style="left:1223px;top:779px;color:#fff;z-index:8;font-size:11px">6:58 PM</span>

<!-- tooltip -->
<div style="left:0;top:753px;width:94px;height:17px;background:#ffffe1;border:1px solid #000;z-index:9"></div>
<span class="t" style="left:2px;top:755px;color:#000;font-size:10.800px;z-index:10">Click here to begin</span>
</body></html>
